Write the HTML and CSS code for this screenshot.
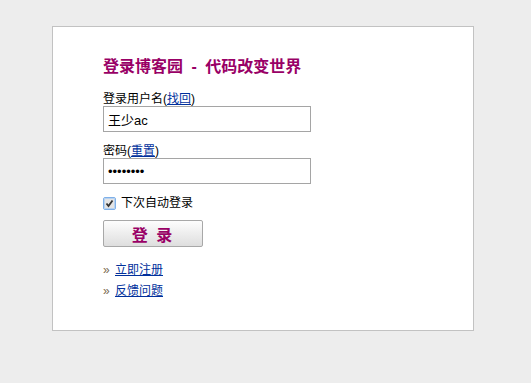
FILE: index.html
```html
<!DOCTYPE html>
<html lang="zh-CN">
<head>
  <meta charset="UTF-8">
  <title>登录博客园</title>
  <link rel="stylesheet" href="styles.css">
</head>
<body>
  <div class="login-box">
    <h2 class="login-title">登录博客园 - 代码改变世界</h2>

    <form class="login-form">
      <div class="form-group">
        <label for="username">登录用户名(<a href="#">找回</a>)</label>
        <input id="username" type="text" value="王少ac">
      </div>
      <div class="form-group">
        <label for="password">密码(<a href="#">重置</a>)</label>
        <input id="password" type="password" value="12345678">
      </div>
      <div class="remember">
        <span class="check-box">
          <svg width="13" height="13" viewBox="0 0 13 13">
            <rect x="0.5" y="0.5" width="12" height="12" rx="1.5" fill="#dcdcdc" stroke="#7fb0e8"/>
            <rect x="1.5" y="1.5" width="10" height="10" fill="#e4e4e4" stroke="#b8d2f0"/>
            <path d="M3.5 6.5 L5.5 9 L9.5 3.5" fill="none" stroke="#333" stroke-width="1.8"/>
          </svg>
        </span>
        下次自动登录
      </div>
      <button type="button" class="login-button">登 录</button>
    </form>

    <ul class="login-links">
      <li><span class="arrow">»</span><a href="#">立即注册</a></li>
      <li><span class="arrow">»</span><a href="#">反馈问题</a></li>
    </ul>
  </div>
</body>
</html>
```

FILE: styles.css
```css
* {
  margin: 0;
  padding: 0;
  box-sizing: border-box;
}

body {
  background-color: #ededed;
  color: #000;
  font-family: "Liberation Sans", "Noto Sans CJK SC", sans-serif;
  font-size: 12px;
  padding: 26px 0 0 52px;
}

/* Caja de login */
.login-box {
  width: 422px;
  height: 305px;
  background-color: #fff;
  border: 1px solid #c2c2c2;
  padding: 30px 50px;
}

.login-title {
  font-size: 16px;
  line-height: 20px;
  font-weight: bold;
  color: #990066;
  word-spacing: 4px;
  margin-bottom: 15px;
}

/* Formulario */
.form-group {
  margin-bottom: 12px;
}

.form-group label {
  display: block;
  line-height: 14px;
}

a {
  color: #00309c;
  text-decoration: underline;
}

.form-group input {
  display: block;
  width: 208px;
  height: 26px;
  border: 1px solid #a5a5a5;
  padding: 0 4px;
  font-family: "Liberation Sans", "Noto Sans CJK SC", sans-serif;
  font-size: 13px;
  color: #000;
  outline: none;
}

.remember {
  display: flex;
  align-items: center;
  gap: 5px;
  height: 14px;
  line-height: 14px;
  margin-bottom: 10px;
}

.check-box {
  display: flex;
  width: 13px;
  height: 13px;
}

.login-button {
  display: block;
  width: 100px;
  height: 27px;
  border: 1px solid #a8a8a8;
  border-radius: 2px;
  background: linear-gradient(#fdfdfd, #dedede);
  color: #990066;
  font-family: "Liberation Sans", "Noto Sans CJK SC", sans-serif;
  font-size: 16px;
  font-weight: bold;
  letter-spacing: 2px;
  cursor: pointer;
}

/* Enlaces */
.login-links {
  list-style: none;
  margin-top: 13px;
}

.login-links li {
  line-height: 21px;
}

.arrow {
  display: inline-block;
  width: 12px;
  color: #7a6a50;
  font-size: 12px;
}
```
